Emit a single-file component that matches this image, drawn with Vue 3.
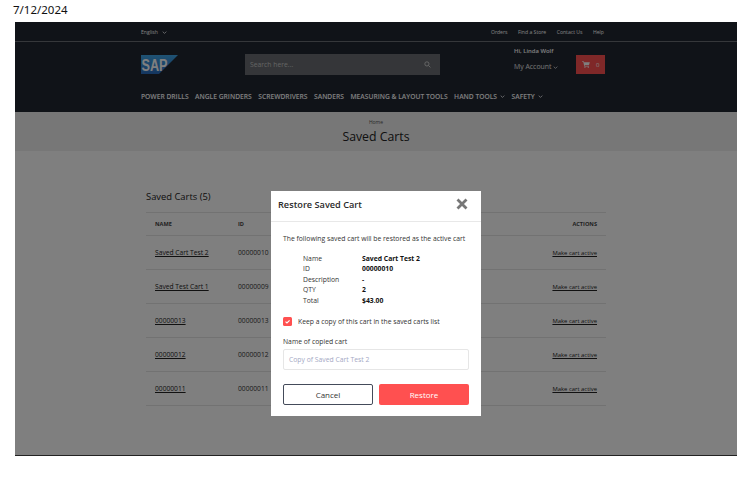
<template>
  <div class="shot">
    <div class="date">7/12/2024</div>
    <div class="page">
      <header class="site-header">
        <div class="top-bar">
          <div class="wrap top-inner">
            <span class="lang">English <svg class="chev" viewBox="0 0 8 5"><path d="M1 1l3 3 3-3" /></svg></span>
            <nav class="top-links">
              <a v-for="link in topLinks" :key="link">{{ link }}</a>
            </nav>
          </div>
        </div>
        <div class="wrap main-row">
          <svg class="logo" viewBox="0 0 37 19">
            <defs>
              <linearGradient id="sapBlue" x1="0" y1="0" x2="0" y2="1">
                <stop offset="0" stop-color="#3fa6e8" />
                <stop offset="1" stop-color="#2a6cc0" />
              </linearGradient>
            </defs>
            <polygon points="0,0 37,0 18,19 0,19" fill="url(#sapBlue)" />
            <text x="0.5" y="16" class="logo-text" textLength="26" lengthAdjust="spacingAndGlyphs">SAP</text>
          </svg>
          <div class="search">
            <span>Search here...</span>
            <svg class="search-icon" viewBox="0 0 12 12"><circle cx="5" cy="5" r="3.6" /><path d="M8 8l3 3" /></svg>
          </div>
          <div class="account">
            <div class="hi">Hi, Linda Wolf</div>
            <div class="my-account">My Account <svg class="chev" viewBox="0 0 8 5"><path d="M1 1l3 3 3-3" /></svg></div>
          </div>
          <div class="cart">
            <svg class="cart-icon" viewBox="0 0 12 11"><path d="M0 0.5h2.4l.5 1.5H12l-1.4 4.6H4l.3 1.1h6.3v1H3.4L1.7 1.5H0z" /><circle cx="4.3" cy="9.8" r="1" /><circle cx="9.6" cy="9.8" r="1" /></svg>
            <span>0</span>
          </div>
        </div>
        <nav class="wrap main-nav">
          <a v-for="item in navItems" :key="item.label">
            {{ item.label }}
            <svg v-if="item.menu" class="chev" viewBox="0 0 8 5"><path d="M1 1l3 3 3-3" /></svg>
          </a>
        </nav>
      </header>

      <section class="title-band">
        <div class="crumb">Home</div>
        <h1>Saved Carts</h1>
      </section>

      <main class="content">
        <h2>Saved Carts (5)</h2>
        <div class="cart-row head">
          <span>NAME</span>
          <span>ID</span>
          <span class="actions">ACTIONS</span>
        </div>
        <div v-for="cart in carts" :key="cart.id" class="cart-row">
          <a>{{ cart.name }}</a>
          <span>{{ cart.id }}</span>
          <a class="actions">Make cart active</a>
        </div>
      </main>

      <div class="scrim">
        <div class="modal">
          <div class="modal-head">
            <h3>Restore Saved Cart</h3>
            <svg class="close" viewBox="0 0 12 12"><path d="M1.5 1.5l9 9M10.5 1.5l-9 9" /></svg>
          </div>
          <div class="modal-body">
            <p class="intro">The following saved cart will be restored as the active cart</p>
            <dl class="details">
              <template v-for="row in details" :key="row.label">
                <dt>{{ row.label }}</dt>
                <dd>{{ row.value }}</dd>
              </template>
            </dl>
            <label class="keep">
              <span class="check"><svg viewBox="0 0 10 10"><path d="M2.8 5.2l1.6 1.5 2.9-3" /></svg></span>
              Keep a copy of this cart in the saved carts list
            </label>
            <div class="field-label">Name of copied cart</div>
            <div class="field">Copy of Saved Cart Test 2</div>
            <div class="buttons">
              <button class="btn cancel">Cancel</button>
              <button class="btn restore">Restore</button>
            </div>
          </div>
        </div>
      </div>
    </div>
  </div>
</template>

<script setup>
const topLinks = ['Orders', 'Find a Store', 'Contact Us', 'Help']

const navItems = [
  { label: 'POWER DRILLS' },
  { label: 'ANGLE GRINDERS' },
  { label: 'SCREWDRIVERS' },
  { label: 'SANDERS' },
  { label: 'MEASURING & LAYOUT TOOLS' },
  { label: 'HAND TOOLS', menu: true },
  { label: 'SAFETY', menu: true }
]

const carts = [
  { name: 'Saved Cart Test 2', id: '00000010' },
  { name: 'Saved Test Cart 1', id: '00000009' },
  { name: '00000013', id: '00000013' },
  { name: '00000012', id: '00000012' },
  { name: '00000011', id: '00000011' }
]

const details = [
  { label: 'Name', value: 'Saved Cart Test 2' },
  { label: 'ID', value: '00000010' },
  { label: 'Description', value: '-' },
  { label: 'QTY', value: '2' },
  { label: 'Total', value: '$43.00' }
]
</script>

<style scoped>
.shot {
  width: 752px;
  height: 479px;
  overflow: hidden;
  background: #fff;
  font-family: "Open Sans", "Noto Sans", sans-serif;
  color: #222;
}
.date {
  height: 22px;
  padding: 4px 0 0 13px;
  box-sizing: border-box;
  font-size: 11.5px;
  line-height: 12px;
  font-family: "Noto Sans", sans-serif;
  color: #111;
}
.page {
  position: relative;
  width: 722px;
  height: 434px;
  margin-left: 15px;
  background: #fff;
  border-bottom: 1px solid #222;
  box-sizing: border-box;
}
.wrap {
  width: 465px;
  margin-left: 126px;
}
.site-header {
  height: 90px;
  background: #202631;
  color: #fff;
}
.top-bar {
  height: 20px;
  border-bottom: 1px solid #6a6e75;
  box-sizing: border-box;
}
.top-inner {
  display: flex;
  justify-content: space-between;
  align-items: center;
  height: 19px;
  font-size: 5.1px;
}
.lang .chev {
  margin-left: 3px;
}
.top-links {
  display: flex;
  gap: 10.5px;
  margin-right: 2px;
}
.chev {
  width: 5px;
  height: 3px;
  margin-left: 2px;
  fill: none;
  stroke: currentColor;
  stroke-width: 1.3;
}
.main-row {
  display: flex;
  align-items: flex-start;
  height: 50px;
}
.logo {
  width: 37px;
  height: 19px;
  margin-top: 13px;
  flex: none;
}
.logo-text {
  font-family: "Liberation Sans", sans-serif;
  font-weight: 700;
  font-size: 16px;
  fill: #fff;
}
.search {
  display: flex;
  justify-content: space-between;
  align-items: center;
  width: 195px;
  height: 21px;
  margin: 12px 0 0 67px;
  padding: 0 5px;
  box-sizing: border-box;
  background: #6a6d72;
  font-size: 6.8px;
  color: #c8c8c8;
}
.search-icon {
  width: 7px;
  height: 7px;
  margin-right: 4px;
  fill: none;
  stroke: #ddd;
  stroke-width: 1.4;
}
.account {
  margin: 5px 0 0 74px;
  width: 62px;
  flex: none;
}
.hi {
  font-size: 5.9px;
  font-weight: 600;
  line-height: 8px;
}
.my-account {
  margin-top: 7px;
  font-size: 6.9px;
  line-height: 9px;
  color: #e8e8e8;
}
.my-account .chev {
  margin-left: 0;
}
.cart {
  display: flex;
  align-items: center;
  gap: 6px;
  width: 29px;
  height: 19px;
  margin-top: 13px;
  padding-left: 6px;
  box-sizing: border-box;
  background: #ff5050;
  font-size: 6px;
  color: #fff;
}
.cart-icon {
  width: 8px;
  height: 7px;
  fill: #fff;
}
.main-nav {
  display: flex;
  gap: 6.5px;
  width: 520px;
  font-size: 6.7px;
  font-weight: 600;
  line-height: 9px;
  white-space: nowrap;
}
.main-nav a {
  display: flex;
  align-items: center;
  gap: 1px;
  color: #fff;
}
.title-band {
  height: 39px;
  background: #eee;
  text-align: center;
}
.crumb {
  padding-top: 7px;
  font-size: 5px;
  line-height: 7px;
  color: #555;
}
h1 {
  margin: 3px 0 0;
  font-size: 12.3px;
  font-weight: 400;
  line-height: 16px;
  color: #222;
}
.content {
  width: 460px;
  margin: 38px 0 0 131px;
}
h2 {
  margin: 0;
  height: 24px;
  font-size: 9.4px;
  font-weight: 400;
  line-height: 15px;
  color: #222;
  border-bottom: 1px solid #e4e4e4;
  box-sizing: border-box;
}
.cart-row {
  display: grid;
  grid-template-columns: 83px 1fr auto;
  align-items: center;
  height: 34px;
  padding: 0 9px;
  box-sizing: border-box;
  border-bottom: 1px solid #e4e4e4;
  font-size: 6.7px;
  color: #333;
}
.cart-row.head {
  height: 23px;
  font-size: 5.6px;
  font-weight: 700;
  color: #444;
}
.cart-row a {
  text-decoration: underline;
  color: #222;
}
.cart-row a.actions {
  font-size: 5.9px;
}
.actions {
  text-align: right;
}
.scrim {
  position: absolute;
  inset: 0;
  display: flex;
  justify-content: center;
  align-items: flex-start;
  background: rgba(0, 0, 0, 0.5);
}
.modal {
  width: 210px;
  height: 225px;
  margin-top: 169px;
  background: #fff;
}
.modal-head {
  display: flex;
  justify-content: space-between;
  align-items: center;
  height: 31px;
  padding: 0 13px 4px 7px;
  box-sizing: border-box;
  border-bottom: 1px solid #e8e8e8;
}
h3 {
  margin: 0;
  font-size: 9.2px;
  font-weight: 600;
  color: #2a2a2a;
}
.close {
  width: 12px;
  height: 12px;
  fill: none;
  stroke: #777;
  stroke-width: 2.8;
}
.modal-body {
  padding: 12px 12px 0;
  font-size: 6.8px;
  color: #333;
}
.intro {
  margin: 0;
  line-height: 9px;
}
.details {
  display: grid;
  grid-template-columns: 59px 1fr;
  grid-auto-rows: 10.5px;
  align-items: center;
  margin: 10px 0 0 20px;
}
.details dt,
.details dd {
  margin: 0;
}
.details dd {
  font-weight: 700;
  color: #111;
}
.keep {
  display: flex;
  align-items: center;
  gap: 6px;
  margin-top: 11px;
  line-height: 10px;
}
.check {
  display: flex;
  width: 9px;
  height: 9px;
  border-radius: 1.5px;
  background: #ff5050;
}
.check svg {
  width: 9px;
  height: 9px;
  fill: none;
  stroke: #fff;
  stroke-width: 1.3;
}
.field-label {
  margin-top: 10px;
  line-height: 9px;
}
.field {
  display: flex;
  align-items: center;
  height: 21px;
  margin-top: 3px;
  padding: 0 5px;
  box-sizing: border-box;
  border: 1px solid #e6e6e6;
  border-radius: 2px;
  color: #a4a8c4;
}
.buttons {
  display: grid;
  grid-template-columns: 90px 90px;
  gap: 6px;
  margin-top: 14px;
}
.btn {
  height: 21px;
  padding: 0;
  border-radius: 2px;
  font-family: "Open Sans", "Noto Sans", sans-serif;
  font-size: 8px;
}
.cancel {
  border: 1px solid #444b5a;
  background: #fff;
  color: #333;
}
.restore {
  border: 0;
  background: #ff5050;
  color: #fff;
}
</style>
